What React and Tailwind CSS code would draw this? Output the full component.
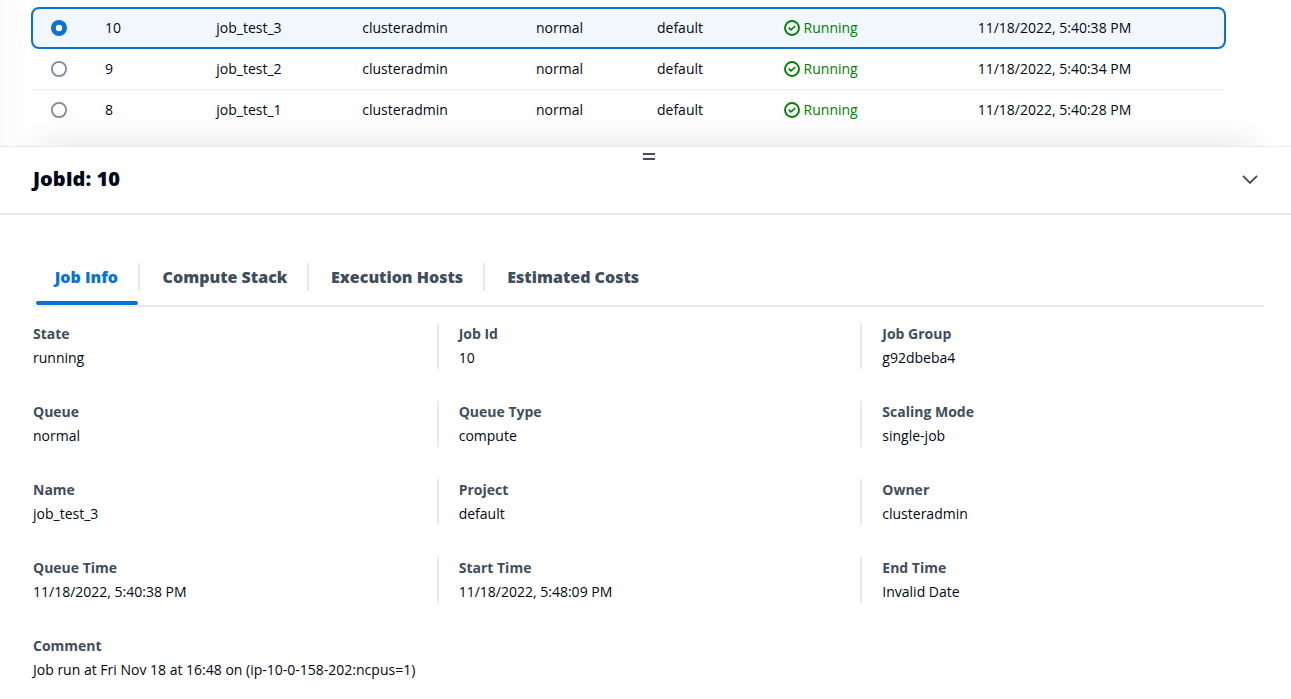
import React from "react";

const jobs = [
  { id: "10", name: "job_test_3", time: "11/18/2022, 5:40:38 PM" },
  { id: "9", name: "job_test_2", time: "11/18/2022, 5:40:34 PM" },
  { id: "8", name: "job_test_1", time: "11/18/2022, 5:40:28 PM" },
];

const rowStyles = [
  "rounded-lg border-2 border-[#0972d3] bg-[#f2f7fe] h-[42px]",
  "border-x-2 border-x-transparent h-10",
  "border-x-2 border-x-transparent border-t border-t-[#eaeaea] h-[41px] bg-clip-padding",
];

const columns = [
  [
    ["State", "running"],
    ["Queue", "normal"],
    ["Name", "job_test_3"],
    ["Queue Time", "11/18/2022, 5:40:38 PM"],
  ],
  [
    ["Job Id", "10"],
    ["Queue Type", "compute"],
    ["Project", "default"],
    ["Start Time", "11/18/2022, 5:48:09 PM"],
  ],
  [
    ["Job Group", "g92dbeba4"],
    ["Scaling Mode", "single-job"],
    ["Owner", "clusteradmin"],
    ["End Time", "Invalid Date"],
  ],
];

const columnStyles = [
  "w-[404px]",
  "w-[423px] [&>div]:border-l-2 [&>div]:pl-[19.7px]",
  "w-[404px] [&>div]:border-l-2 [&>div]:pl-[20.3px]",
];

function Radio({ selected }) {
  return (
    <svg width="16" height="16" viewBox="0 0 16 16" className="block">
      {selected ? (
        <>
          <circle cx="8" cy="8" r="8" fill="#0972d3" />
          <circle cx="8" cy="8" r="3.2" fill="#fff" />
        </>
      ) : (
        <circle cx="8" cy="8" r="7.1" fill="#fff" stroke="#7d8998" strokeWidth="1.8" />
      )}
    </svg>
  );
}

function Status() {
  return (
    <div className="flex w-[194px] items-center gap-[3.6px] text-[#008000]">
      <svg width="16" height="16" viewBox="0 0 16 16" fill="none" stroke="currentColor">
        <circle cx="8" cy="8" r="7" strokeWidth="1.9" />
        <path d="m4.6 7.6 2.4 2.3 4.3-3.9" strokeWidth="1.6" />
      </svg>
      <span>Running</span>
    </div>
  );
}

function Row({ job, index }) {
  return (
    <div className={"flex w-[1195px] items-center pl-[18px] " + rowStyles[index]}>
      <div className="w-[54px]"><Radio selected={index === 0} /></div>
      <div className="w-[111.3px]">{job.id}</div>
      <div className="w-[146px]">{job.name}</div>
      <div className="w-[173.7px]">clusteradmin</div>
      <div className="w-[121px]">normal</div>
      <div className="w-[127px]">default</div>
      <Status />
      <div className="-ml-[0.3px]">{job.time}</div>
    </div>
  );
}

function Field({ label, value }) {
  return (
    <div className="flex h-[46px] flex-col gap-0.5 border-[#eaeaea]">
      <div className="font-bold text-[#414d5c]">{label}</div>
      <div>{value}</div>
    </div>
  );
}

export default function App() {
  return (
    <div className="flex h-[699px] w-[1291px] flex-col overflow-hidden bg-white font-['Open_Sans','Noto_Sans',sans-serif] text-sm leading-[22px] text-[#000716] antialiased">
      <div className="h-[146px] shrink-0 bg-linear-to-r from-[#fafafa] to-white to-[30px] pt-[7px] pl-[31px]">
        {jobs.map((job, i) => <Row key={job.id} job={job} index={i} />)}
      </div>

      <section className="relative flex-1 border-t border-[#eaeaea] bg-white shadow-[0_-36px_36px_-36px_rgba(0,0,0,0.12)]">
        <header className="flex h-[68px] flex-col border-b-2 border-[#eaeaea]">
          <div className="flex justify-center pt-1.5 pl-1.5">
            <svg width="12" height="7" viewBox="0 0 12 7" fill="#414d5c">
              <path d="M0 0h12v2H0zM0 5h12v2H0z" />
            </svg>
          </div>
          <div className="flex items-center justify-between pt-[7px] pr-[33px] pl-[33px]">
            <h2 className="text-xl leading-6 font-extrabold">JobId: 10</h2>
            <svg width="16" height="16" viewBox="0 0 16 16" fill="none" stroke="#414d5c" strokeWidth="1.9">
              <path d="m1 4.8 7 7 7-7" />
            </svg>
          </div>
        </header>

        <div className="pt-[48px] pl-[33px]">
          <nav className="flex h-[44px] w-[1231px] border-b-2 border-[#eaeaea] text-base leading-7 font-extrabold text-[#414d5c]">
            <div className="ml-[3px] flex h-[42px] w-[104px] flex-col justify-between">
              <div className="h-7 border-r-2 border-[#eaeaea] pl-[18.7px] text-[#0972d3]">Job Info</div>
              <div className="h-1 w-[102px] rounded-sm bg-[#0972d3]" />
            </div>
            <div className="h-7 w-[169px] border-r-2 border-[#eaeaea] pl-[22.6px]">Compute Stack</div>
            <div className="h-7 w-[176px] border-r-2 border-[#eaeaea] pl-[22px]">Execution Hosts</div>
            <div className="h-7 pl-[22.3px]">Estimated Costs</div>
          </nav>

          <div className="flex pt-4">
            {columns.map((fields, i) => (
              <div key={i} className={"flex flex-col gap-8 " + columnStyles[i]}>
                {fields.map(([label, value]) => <Field key={label} label={label} value={value} />)}
              </div>
            ))}
          </div>
          <div className="pt-8">
            <Field label="Comment" value="Job run at Fri Nov 18 at 16:48 on (ip-10-0-158-202:ncpus=1)" />
          </div>
        </div>
      </section>
    </div>
  );
}
